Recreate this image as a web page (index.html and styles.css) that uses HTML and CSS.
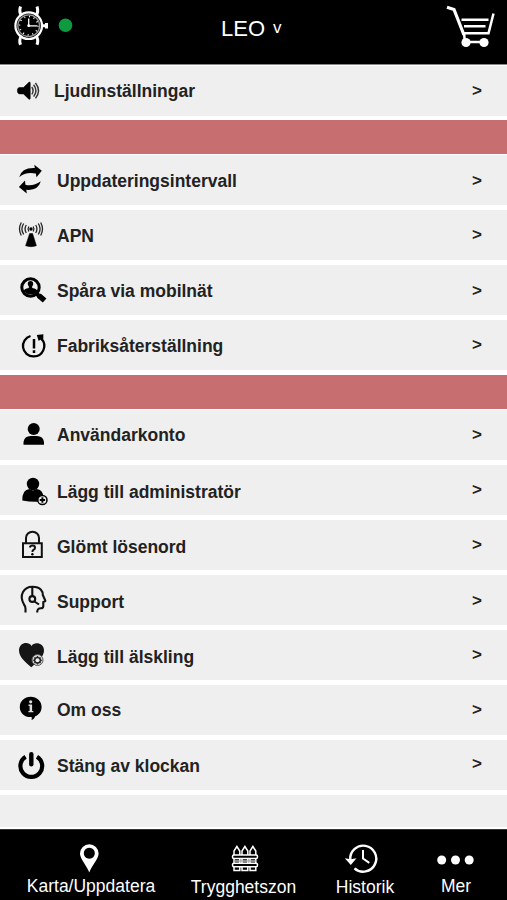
FILE: index.html
```html
<!DOCTYPE html>
<html lang="sv">
<head>
<meta charset="utf-8">
<title>LEO</title>
<link rel="stylesheet" href="styles.css">
</head>
<body>
<div class="app">
<header class="top">
  <svg class="watch" viewBox="8 0 72 64" fill="none" stroke="#fff">
    <path d="M20.500 6.500C19 11 19.500 13 21.500 16M37 6.500c1.500 4.500 1 6.500-1 9.500M20.500 44.800c-1.500-4-1-6.300 1-9.300M37 44.800c1.500-4 1-6.300-1-9.300" stroke-width="3"/>
    <circle cx="28.700" cy="25.700" r="13.300" stroke-width="2.200"/>
    <circle cx="28.700" cy="25.700" r="10.900" stroke="#999" stroke-width="1.300"/>
    <circle cx="28.700" cy="25.700" r="9.200" stroke-width="1.700" stroke-dasharray="1 3.817"/>
    <path d="M28.700 18.500v7.300h8.500" stroke-width="1.300"/>
    <circle cx="28.700" cy="25.700" r="1.400" fill="#fff" stroke="none"/>
    <path d="M42 25.700h4M46.500 23v5.400" stroke-width="3"/>
    <circle cx="65.500" cy="25.200" r="6.800" fill="#109a3f" stroke="none"/>
  </svg>
  <div class="title">LEO<span class="caret">v</span></div>
  <svg class="cart" viewBox="443 0 56 64" fill="none" stroke="#fff" stroke-width="2.500">
    <path d="M447 7.200l7 2.300L464 35" stroke-width="3.200"/>
    <path d="M493.500 13.500l-5 19.700H463M461.500 19.700h27M464 26.300h21.500"/>
    <path d="M464 32l.8 10H484"/>
    <g fill="#fff" stroke="none"><circle cx="466" cy="42.500" r="4.600"/><circle cx="484" cy="42.500" r="4.600"/></g>
  </svg>
</header>
<main class="menu">
  <section class="group">
    <a class="row first"><svg class="icon" viewBox="14 0 40 50"><path d="M17.400 24.500c0-2 .8-3 2.600-3h3.500l5.200-5c1-.8 1.500-.5 1.500.8v14.800c0 1.300-.6 1.600-1.500.8l-5.200-5H20c-1.800 0-2.600-1.200-2.600-3.400z" stroke="#000" stroke-width=".6"/><path d="M31.800 21q2.500 3.700 0 7.400M33.600 18.800q4.600 5.900 0 11.800M35.500 17q6 7.700 0 15.400" fill="none" stroke="#333" stroke-width="1.400"/></svg><span class="label">Ljudinställningar</span><span class="go">&gt;</span></a>
  </section>
  <div class="band"></div>
  <section class="group">
    <a class="row"><svg class="icon" viewBox="14 0 40 50"><path d="M19.200 22.200Q21.500 12.500 34.800 13L34.300 9.800 41.800 15.800 36.500 22.300 35.800 18.600Q26 16.500 19.200 22.200z"/><path d="M40.800 26.300Q38 36 26.300 34.800L26.800 38.500 18.900 32 25 25.600 25.400 29.800Q33 31.800 40.800 26.300z"/></svg><span class="label low">Uppdateringsintervall</span><span class="go down">&gt;</span></a>
    <a class="row"><svg class="icon" viewBox="14 0 40 50"><path d="M29.600 23.500h3l3.800 12.200q-5.300 2-10.800 0z" stroke="#000" stroke-width=".5"/><circle cx="31" cy="19" r="1.700"/><path d="M28.800 16.500q-1.500 2.500 0 5M33.200 16.500q1.500 2.500 0 5M26.300 15q-2.500 4 0 8M35.700 15q2.500 4 0 8M23.700 13.500q-3.600 5.500 0 11M38.300 13.500q3.600 5.500 0 11M21.300 12.500q-3.600 6.500 0 13M40.700 12.500q3.600 6.500 0 13" fill="none" stroke="#222" stroke-width="1.300"/></svg><span class="label low">APN</span><span class="go">&gt;</span></a>
    <a class="row"><svg class="icon" viewBox="14 0 40 50"><circle cx="30.500" cy="22.500" r="8.700" fill="none" stroke="#000" stroke-width="3"/><circle cx="30.500" cy="18.700" r="2.700"/><path d="M28.800 19h3.400v4q5 .8 5.300 3.400-6 6-14 0 .3-2.600 5.300-3.400z"/><path d="M36.500 28.500l3.500 3.500" stroke="#000" stroke-width="4"/><path d="M38.800 30.500l5.800 5" stroke="#000" stroke-width="5.600"/></svg><span class="label low">Spåra via mobilnät</span><span class="go down">&gt;</span></a>
    <a class="row"><svg class="icon" viewBox="14 0 40 50"><path d="M30.500 16A10.400 10.400 0 0 0 33.300 36.400 10.400 10.400 0 0 0 41 18.500" fill="none" stroke="#000" stroke-width="2.300"/><path d="M36.800 15l6.600-.8-.2 6.800-2.700-1.600-1.800 1.600z"/><path d="M34 19v9.500M34 30.300v2.800" stroke="#000" stroke-width="2.500"/></svg><span class="label low">Fabriksåterställning</span><span class="go">&gt;</span></a>
  </section>
  <div class="band"></div>
  <section class="group">
    <a class="row"><svg class="icon" viewBox="14 0 40 50"><circle cx="33.700" cy="19" r="6"/><path d="M23.500 34.700V32q.8-6 7.200-6h6q6.600 0 7.300 6v2.700z"/></svg><span class="label">Användarkonto</span><span class="go">&gt;</span></a>
    <a class="row"><svg class="icon" viewBox="14 0 40 50"><circle cx="33" cy="19" r="6.200"/><path d="M22.300 35.500q-.2-11 7.200-11.500l3.500 1.500 3.500-1.500q6.500.5 6.800 8L38 36.800q-8 .3-15.700-1.300z"/><circle cx="42.400" cy="35" r="4.600" fill="#efefef" stroke="#000" stroke-width="1.500"/><path d="M39.700 35h5.400M42.400 32.300v5.400" stroke="#000" stroke-width="1.900"/></svg><span class="label lower">Lägg till administratör</span><span class="go">&gt;</span></a>
    <a class="row"><svg class="icon" viewBox="14 0 40 50"><path d="M23 23.300h18.800v13.800H23zM26 23V18a6.500 6.300 0 0 1 13 0v5" fill="none" stroke="#111" stroke-width="2"/><path d="M29.800 27.500q.5-2 2.700-2 2.500 0 2.500 2.200 0 1.300-1.500 2.100-1 .6-1 1.700v.6" fill="none" stroke="#111" stroke-width="2"/><circle cx="32.400" cy="34.300" r="1.200"/></svg><span class="label lower">Glömt lösenord</span><span class="go">&gt;</span></a>
    <a class="row"><svg class="icon" viewBox="14 0 40 50" fill="none" stroke="#111" stroke-width="2.100"><path d="M25.500 37.500V33.500Q25.500 31.500 24 29.500C18.500 20 24 11.800 32.500 11.800S43 17 42.800 20l2.500 5.500q.2 1-2 1.500v4q0 2.300-2.500 2.300-3.800 0-3.600 4.200"/><path d="M32.300 12v9M34.500 26.500l4.500 3"/><circle cx="32.300" cy="24" r="2.900"/></svg><span class="label lower">Support</span><span class="go down">&gt;</span></a>
    <a class="row"><svg class="icon" viewBox="14 0 40 50"><path d="M31.300 37.300C25 31.500 19 27 19 20.500c0-8 9.500-9.500 12.500-4.500C34 11.500 44 12.500 44 20.500c0 6.500-6.500 11-12.700 16.800z" fill="#151515"/><circle cx="37.500" cy="30" r="5.500" fill="#ddd" stroke="#555" stroke-width="1"/><path d="M37.500 25.800l1.400 1.400h1.900v1.900l1.300 1.100-1.300 1.200v1.900h-1.900l-1.400 1.400-1.400-1.400h-1.900v-1.900l-1.300-1.200 1.300-1.100v-1.900h1.900z" fill="#222"/><circle cx="37.500" cy="30.200" r="2" fill="#eee"/></svg><span class="label lower">Lägg till älskling</span><span class="go">&gt;</span></a>
    <a class="row"><svg class="icon" viewBox="14 0 40 50"><path d="M30.700 11.700c6.200 0 10.900 4.300 10.900 10.200 0 4.400-2.500 7.800-6.400 9.300-.6 2-2 3.200-3.700 3.700.5-1.100.3-2 0-2.800-7 .3-11.700-4.200-11.700-10.200 0-5.900 4.700-10.200 10.900-10.200z"/><g fill="#ddd"><circle cx="30.700" cy="16.800" r="1.600"/><path d="M28.500 19.600h3.600v6.300h1.200v1.400h-4.900v-1.400h1.200V21h-1.100z"/></g></svg><span class="label high">Om oss</span><span class="go">&gt;</span></a>
    <a class="row"><svg class="icon" viewBox="14 0 40 50"><path d="M25.600 16.700a10.900 10.900 0 1 0 11.400 0" fill="none" stroke="#000" stroke-width="4.200"/><path d="M31.300 14.200v10" stroke="#000" stroke-width="4.400" stroke-linecap="round"/></svg><span class="label low">Stäng av klockan</span><span class="go up">&gt;</span></a>
    <div class="row blank"></div>
  </section>
</main>
<nav class="tabs">
  <a class="tab map"><svg class="tabicon" viewBox="67 0 48 46"><path fill="#fff" fill-rule="evenodd" d="M89.300 43.500C86.500 36 80 30 80 24.500a9.300 9.300 0 0 1 18.600 0C98.600 30 92 36 89.300 43.500zM89.300 18.800a5.500 5.500 0 1 0 .01 0z"/></svg><span>Karta/Uppdatera</span></a>
  <a class="tab zone"><svg class="tabicon" viewBox="219.500 0 48 46" fill="none" stroke="#fff" stroke-width="1.500"><path d="M233.500 41.500V22l2.900-4.500 2.900 4.500v19.500zM241.500 41.500V22l2.900-4.500 2.900 4.500v19.500zM249.500 41.500V22l2.900-4.500 2.900 4.500v19.500z"/><rect x="232" y="26" width="25" height="3.500" rx="1.500" fill="#000"/><rect x="232" y="34.300" width="25" height="3.500" rx="1.500" fill="#000"/><path d="M233.800 32h21.400" stroke="#bbb"/></svg><span>Trygghetszon</span></a>
  <a class="tab history"><svg class="tabicon" viewBox="341 0 48 46" fill="none" stroke="#fff" stroke-width="2.400"><path d="M350.300 31A13 13 0 1 1 354.500 39.300"/><path d="M363 21v8.500l6.300 4.300" stroke-width="2"/><path d="M344.800 29.300l6 1 5.700-1-5.700 6.700z" fill="#fff" stroke="none"/></svg><span>Historik</span></a>
  <a class="tab more"><svg class="tabicon" viewBox="432 0 48 46" fill="#fff"><circle cx="441.700" cy="31" r="4.500"/><circle cx="455.500" cy="31" r="4.500"/><circle cx="469.200" cy="31" r="4.500"/></svg><span>Mer</span></a>
</nav>
</div>
</body>
</html>
```
FILE: styles.css
```css
* { box-sizing: border-box; }
body { margin: 0; background: #000; font-family: "Liberation Sans", Arial, sans-serif; }
svg { display: block; flex: none; }
.app { width: 507px; height: 900px; display: flex; flex-direction: column; overflow: hidden; }
.top { height: 64px; flex: none; display: flex; justify-content: space-between; background: #000; padding: 0 8px; }
.watch { width: 72px; height: 64px; }
.cart { width: 56px; height: 64px; }
.title { flex: 1; padding: 16px 0 0 141px; color: #fff; font-size: 22px; line-height: 26px; }
.caret { font-size: 17px; margin-left: 8px; position: relative; top: -3px; }
.menu { height: 765px; flex: none; background: #fff; padding-top: 1px; border-top: 1px solid #888; }
.group { display: grid; row-gap: 5px; }
.row { height: 50px; background: #efefef; display: flex; align-items: center; padding: 0 25px 0 14px; color: #222; font-weight: bold; font-size: 17.5px; line-height: 20px; }
.icon { width: 40px; height: 50px; }
.label { flex: 1; padding-left: 3px; }
.first .label { padding-left: 0; }
.low { margin-top: 2px; }
.lower { margin-top: 4px; }
.high { margin-top: -1px; }
.go { font-size: 17px; }
.down { margin-top: 2px; }
.up { margin-top: -3px; }
.blank { height: 32px; }
.band { height: 34px; margin: 4px 0 1px; background: #c66e70; }
.band + .group + .band { margin-top: 5px; }
.tabs { height: 71px; flex: none; display: flex; background: #000; color: #fff; font-size: 17.5px; line-height: 20px; border-top: 1px solid #333; }
.tab { display: flex; flex-direction: column; align-items: center; margin-top: -1px; white-space: nowrap; }
.tabicon { width: 48px; height: 46px; }
.tab span { margin-top: 1px; }
.map { width: 182px; }
.zone { width: 123px; }
.history { width: 120px; }
.more { width: 62px; }
.zone span, .history span { margin-top: 2px; }
```
